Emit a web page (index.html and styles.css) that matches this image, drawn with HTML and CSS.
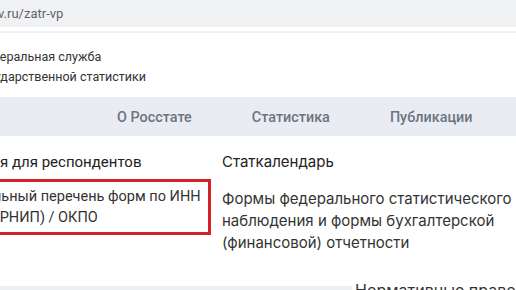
FILE: index.html
```html
<!DOCTYPE html>
<html lang="ru">
<head>
  <meta charset="UTF-8">
  <meta name="viewport" content="width=device-width, initial-scale=1.0">
  <title>Росстат — Информация для респондентов</title>
  <link rel="stylesheet" href="styles.css">
</head>
<body>
  <div class="urlbar">
    <span class="url">v.ru/zatr-vp</span>
  </div>
  <div class="rule"></div>

  <header class="brand">
    <div class="brand-name">Федеральная служба<br>государственной статистики</div>
  </header>

  <nav class="menu">
    <a href="#">О Росстате</a>
    <a href="#">Статистика</a>
    <a href="#">Публикации</a>
  </nav>

  <main class="content">
    <section class="col col-left">
      <h2 class="col-title">Информация для респондентов</h2>
      <a class="link link-marked" href="#">Индивидуальный перечень форм по ИНН / ОГРН (ОГРНИП) / ОКПО</a>
    </section>
    <section class="col col-right">
      <h2 class="col-title">Статкалендарь</h2>
      <a class="link" href="#">Формы федерального статистического наблюдения и формы бухгалтерской (финансовой) отчетности</a>
    </section>
  </main>

  <div class="next">
    <div class="next-band"></div>
    <div class="next-card">Нормативные правовые акты</div>
  </div>
</body>
</html>
```

FILE: styles.css
```css
body {
  font-family: Inter, Roboto, Arial, sans-serif;
  background-color: #fff;
  margin: 0;
  width: 516px;
  height: 290px;
  overflow: hidden;
  color: #2b2b2b;
}
a {
  color: inherit;
  text-decoration: none;
}
.urlbar {
  height: 27px;
  background-color: #f0f1f3;
  display: flex;
  align-items: center;
}
.url {
  margin-left: -2px;
  font-family: Roboto, Arial, sans-serif;
  font-size: 13px;
  color: #5f6368;
  white-space: nowrap;
}
.rule {
  height: 2px;
  margin-top: 4px;
  background-color: #eef0f3;
}
.brand {
  height: 65px;
  border-bottom: 1px solid #eceef2;
  padding-top: 14px;
  box-sizing: border-box;
}
.brand-name {
  margin-left: -24px;
  font-family: Roboto, Arial, sans-serif;
  font-size: 12.5px;
  line-height: 20px;
  color: #333;
  white-space: nowrap;
}
.menu {
  height: 38px;
  background-color: #e9edf3;
  display: flex;
  align-items: center;
  gap: 60px;
  padding-left: 117px;
}
.menu a {
  font-family: Roboto, Arial, sans-serif;
  font-size: 14.4px;
  font-weight: 500;
  color: #6d7480;
  white-space: nowrap;
}
.content {
  display: grid;
  grid-template-columns: 311px 1fr;
  column-gap: 11px;
  margin-left: -100px;
  padding-top: 15px;
  height: 148px;
  box-sizing: border-box;
}
.col-title {
  margin: 0;
  font-size: 15px;
  font-weight: 400;
  line-height: 22px;
  color: #222;
  white-space: nowrap;
}
.col-left .col-title {
  padding-left: 16px;
  font-family: Roboto, Arial, sans-serif;
}
.link {
  display: block;
  font-size: 15px;
  line-height: 22px;
  color: #333;
}
.link-marked {
  margin-top: 6px;
  padding: 4px 5px 4px 23px;
  text-indent: -9px;
  font-family: Roboto, Arial, sans-serif;
  font-size: 14.5px;
  line-height: 21px;
  border: 3px solid #d3212a;
}
.col-right .link {
  margin-top: 15px;
}
.next {
  display: flex;
  height: 6px;
}
.next-band {
  flex-shrink: 0;
  width: 352px;
  margin-top: 2px;
  background-color: #eceef1;
}
.next-card {
  flex: 1;
  min-width: 0;
  overflow: hidden;
  padding-left: 3px;
  font-size: 16px;
  line-height: 12px;
  color: #333;
  white-space: nowrap;
}
```
